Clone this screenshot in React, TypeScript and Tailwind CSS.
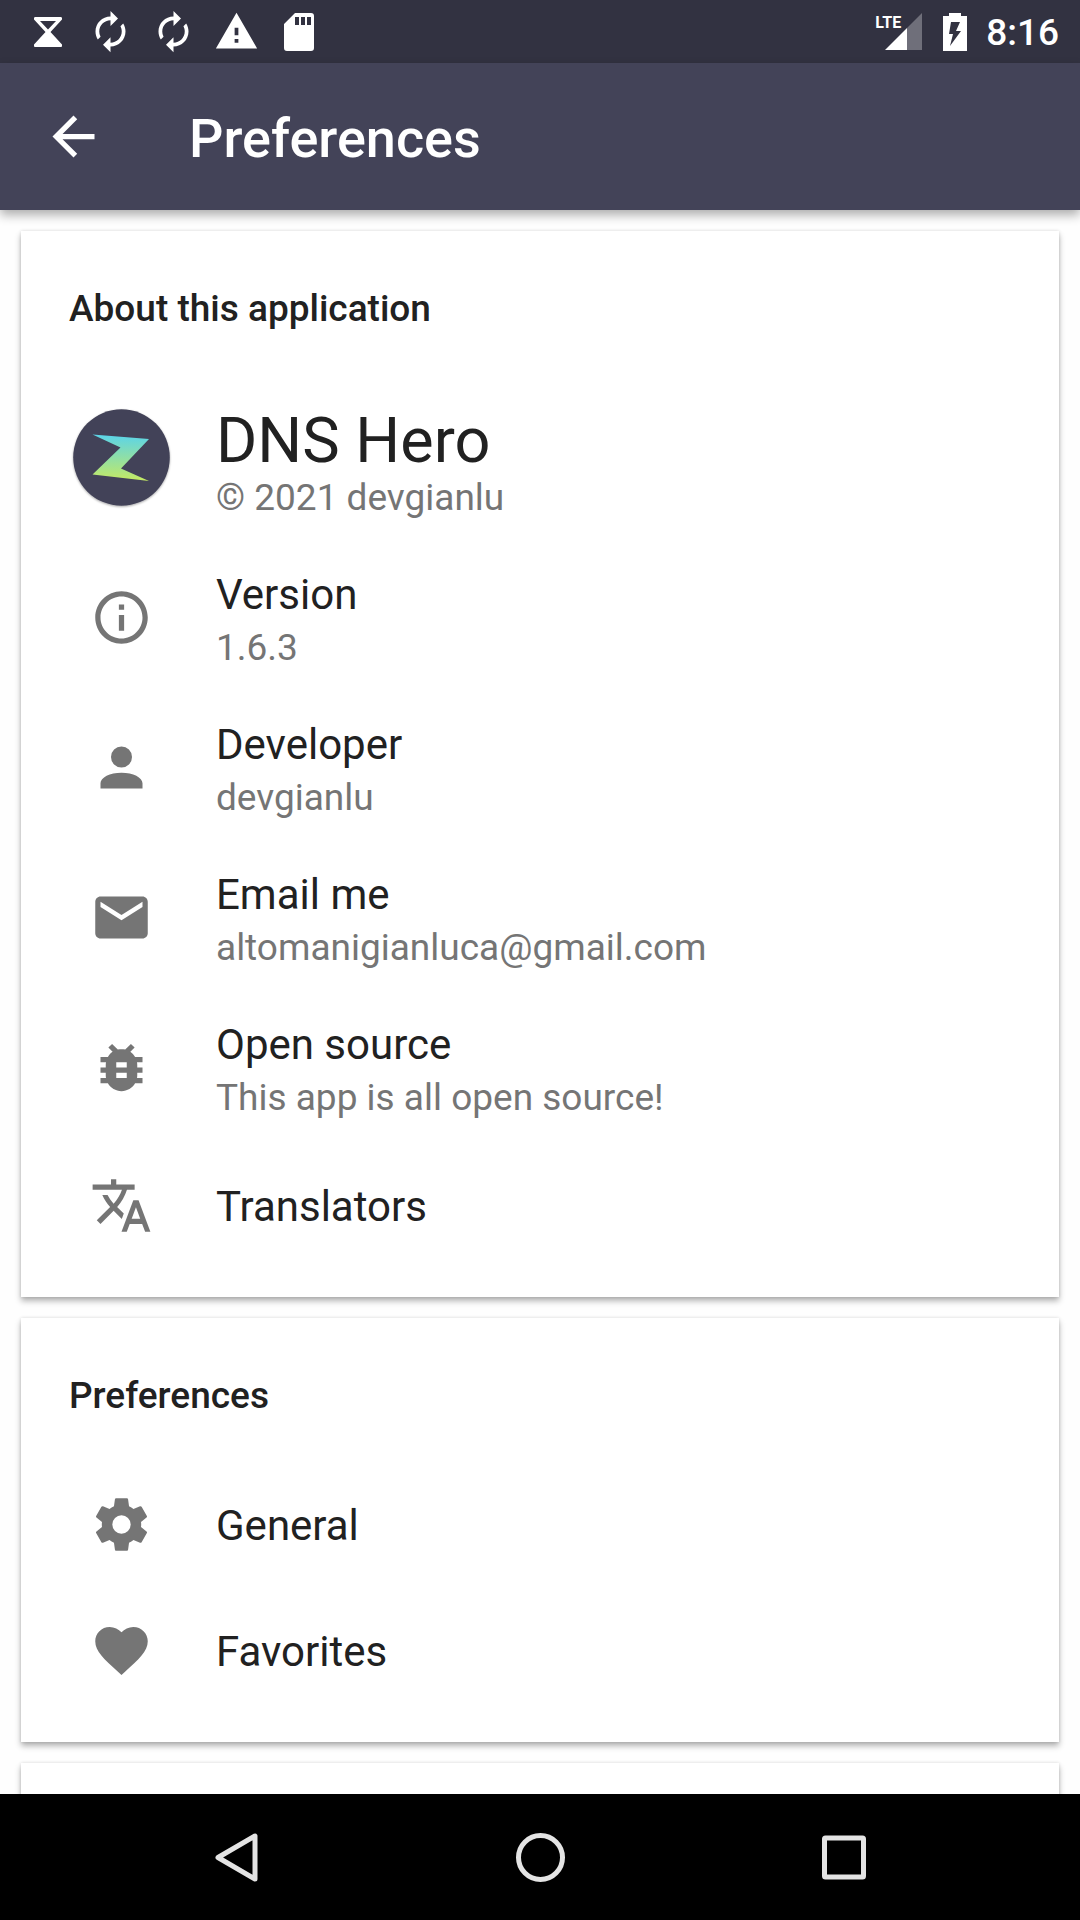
import React from "react";
import { MdArrowBack, MdAutorenew, MdBugReport, MdEmail, MdFavorite, MdInfoOutline, MdTranslate, MdWarning } from "react-icons/md";

function PersonIcon({ className }: { className?: string }) {
  return (
    <svg viewBox="0 0 24 24" fill="currentColor" className={className}>
      <path d="M12 4a4 4 0 1 1 0 8 4 4 0 0 1 0-8m0 10c4.42 0 8 1.79 8 4v2H4v-2c0-2.21 3.58-4 8-4z" />
    </svg>
  );
}

function GearIcon({ className }: { className?: string }) {
  return (
    <svg viewBox="0 0 24 24" fill="currentColor" className={className}>
      <path d="M12,15.5A3.5,3.5 0 0,1 8.5,12A3.5,3.5 0 0,1 12,8.5A3.5,3.5 0 0,1 15.5,12A3.5,3.5 0 0,1 12,15.5M19.43,12.97C19.47,12.65 19.5,12.33 19.5,12C19.5,11.67 19.47,11.34 19.43,11L21.54,9.37C21.73,9.22 21.78,8.95 21.66,8.73L19.66,5.27C19.54,5.05 19.27,4.96 19.05,5.05L16.56,6.05C16.04,5.66 15.5,5.32 14.87,5.07L14.5,2.42C14.46,2.18 14.25,2 14,2H10C9.75,2 9.54,2.18 9.5,2.42L9.13,5.07C8.5,5.32 7.96,5.66 7.44,6.05L4.95,5.05C4.73,4.96 4.46,5.05 4.34,5.27L2.34,8.73C2.21,8.95 2.27,9.22 2.46,9.37L4.57,11C4.53,11.34 4.5,11.67 4.5,12C4.5,12.33 4.53,12.65 4.57,12.97L2.46,14.63C2.27,14.78 2.21,15.05 2.34,15.27L4.34,18.73C4.46,18.95 4.73,19.03 4.95,18.95L7.44,17.94C7.96,18.34 8.5,18.68 9.13,18.93L9.5,21.58C9.54,21.82 9.75,22 10,22H14C14.25,22 14.46,21.82 14.5,21.58L14.87,18.93C15.5,18.67 16.04,18.34 16.56,17.94L19.05,18.95C19.27,19.03 19.54,18.95 19.66,18.73L21.66,15.27C21.78,15.05 21.73,14.78 21.54,14.63L19.43,12.97Z" />
    </svg>
  );
}

function HourglassIcon() {
  return (
    <svg viewBox="0 0 30 32" className="h-8 w-[30px]" fill="currentColor">
      <path fillRule="evenodd" d="M2 1H28Q29.500 1 29 3.500L17.500 16 29 28.500Q29.500 31 28 31H2Q.500 31 1 28.500L12.500 16 1 3.500Q.500 1 2 1ZM7 5 15 13.500 23 5Z" />
    </svg>
  );
}

function SdCardIcon() {
  return (
    <svg viewBox="0 0 30 38" className="h-[38px] w-[30px]" fill="currentColor">
      <path fillRule="evenodd" d="M11 0H27Q30 0 30 3V35Q30 38 27 38H3Q0 38 0 35V11ZM11 4V12H15V4ZM17 4V12H21V4ZM23 4V12H27V4Z" />
    </svg>
  );
}

function SignalIcon() {
  return (
    <svg viewBox="0 0 37 37" className="h-[37px] w-[37px]" fill="currentColor">
      <path d="M37 0V37H22V15Z" opacity="0.3" />
      <path d="M22 15V37H0Z" />
    </svg>
  );
}

function BatteryIcon() {
  return (
    <svg viewBox="0 0 24 38" className="h-[38px] w-6" fill="currentColor">
      <path fillRule="evenodd" d="M6 0H18V3H24V38H0V3H6ZM8 9 6 21H10L7 33 18 18H13L17 9Z" />
    </svg>
  );
}

function AppLogo() {
  return (
    <svg viewBox="0 0 105 105" className="size-[105px] shrink-0" role="img" aria-label="DNS Hero logo">
      <defs>
        <linearGradient id="bolt" x1="0" y1="0" x2="0" y2="1">
          <stop offset="0" stopColor="#5ad4ea" />
          <stop offset="1" stopColor="#c5ea62" />
        </linearGradient>
        <filter id="lift" x="-10%" y="-10%" width="120%" height="120%">
          <feDropShadow dx="0" dy="1" stdDeviation="1" floodOpacity="0.35" />
        </filter>
      </defs>
      <circle cx="52.500" cy="51.500" r="48.300" fill="#434358" filter="url(#lift)" />
      <path d="M23.500 28.500 80 33 52 62.500 80 75 23.500 68.500 51.500 41.500Z" fill="url(#bolt)" />
    </svg>
  );
}

function SectionCard({ title, children }: { title: string; children?: React.ReactNode }) {
  return (
    <section className="bg-white pb-[29px] shadow-[0_4px_6px_rgba(0,0,0,0.3),0_0_3px_rgba(0,0,0,0.12)]">
      <h2 className="flex h-[143px] items-center px-12 pt-3 text-[37px] font-medium">{title}</h2>
      {children}
    </section>
  );
}

type RowProps = { icon: React.ElementType; label: string; detail?: string };

function Row({ icon: Icon, label, detail }: RowProps) {
  return (
    <button type="button" className={`flex w-full items-center px-12 text-left ${detail ? "h-[150px]" : "h-[126px]"}`}>
      <span className="flex w-[105px] shrink-0 justify-center">
        <Icon className="size-[63px] text-[#757575]" />
      </span>
      <span className="ml-[42px] flex flex-col gap-0.5 pt-1">
        <span className="text-[42px] leading-[56px]">{label}</span>
        {detail && <span className="text-[37px] leading-[46px] text-[#757575]">{detail}</span>}
      </span>
    </button>
  );
}

const aboutRows: RowProps[] = [
  { icon: MdInfoOutline, label: "Version", detail: "1.6.3" },
  { icon: PersonIcon, label: "Developer", detail: "devgianlu" },
  { icon: MdEmail, label: "Email me", detail: "altomanigianluca@gmail.com" },
  { icon: MdBugReport, label: "Open source", detail: "This app is all open source!" },
  { icon: MdTranslate, label: "Translators" },
];

const preferenceRows: RowProps[] = [
  { icon: GearIcon, label: "General" },
  { icon: MdFavorite, label: "Favorites" },
];

export default function App() {
  return (
    <div className="flex h-screen flex-col overflow-hidden bg-[#fefefe] font-['Roboto',sans-serif] text-[#212121]">
      <div className="flex h-[63px] shrink-0 items-center justify-between bg-[#323241] pr-[21px] pl-[33px] text-white">
        <div className="flex items-center">
          <HourglassIcon />
          <MdAutorenew className="ml-[25px] size-[45px]" />
          <MdAutorenew className="ml-[18px] size-[45px]" />
          <MdWarning className="ml-[18px] size-[45px]" />
          <span className="ml-[25px]"><SdCardIcon /></span>
        </div>
        <div className="flex items-center">
          <span className="relative mr-[21px]">
            <SignalIcon />
            <span className="absolute -top-0.5 right-[21px] text-base leading-6 font-bold">LTE</span>
          </span>
          <BatteryIcon />
          <time className="ml-[19px] pt-0.5 text-[37px] leading-[61px] font-medium">8:16</time>
        </div>
      </div>
      <header className="z-10 flex h-[147px] shrink-0 items-center bg-[#434358] px-[42px] text-white shadow-[0_5px_10px_rgba(0,0,0,0.32)]">
        <button type="button" aria-label="Back">
          <MdArrowBack className="size-[63px]" />
        </button>
        <h1 className="ml-[84px] pt-1 text-[54px] font-medium">Preferences</h1>
      </header>
      <main className="flex min-h-0 flex-1 flex-col gap-[21px] overflow-hidden p-[21px]">
        <SectionCard title="About this application">
          <div className="flex h-[168px] items-center px-12">
            <AppLogo />
            <div className="ml-[42px] pt-3">
              <p className="text-[63px] leading-[68px]">DNS Hero</p>
              <p className="text-[37px] leading-[46px] text-[#757575]">© 2021 devgianlu</p>
            </div>
          </div>
          {aboutRows.map((r) => <Row key={r.label} {...r} />)}
        </SectionCard>
        <SectionCard title="Preferences">
          {preferenceRows.map((r) => <Row key={r.label} {...r} />)}
        </SectionCard>
        <SectionCard title="" />
      </main>
      <nav className="flex h-[126px] shrink-0 items-center justify-center gap-[240px] bg-black text-[#e4e4e4]">
        <button type="button" aria-label="Back">
          <svg viewBox="0 0 63 63" className="size-[63px]" fill="none" stroke="currentColor" strokeWidth="5" strokeLinejoin="round"><path d="M49 10V53L12 31.500Z" /></svg>
        </button>
        <button type="button" aria-label="Home">
          <svg viewBox="0 0 63 63" className="size-[63px]" fill="none" stroke="currentColor" strokeWidth="5"><circle cx="31.500" cy="31.500" r="22" /></svg>
        </button>
        <button type="button" aria-label="Recent apps">
          <svg viewBox="0 0 63 63" className="size-[63px]" fill="none" stroke="currentColor" strokeWidth="5" strokeLinejoin="round"><rect x="12.500" y="12" width="39" height="39" rx="1" /></svg>
        </button>
      </nav>
    </div>
  );
}
